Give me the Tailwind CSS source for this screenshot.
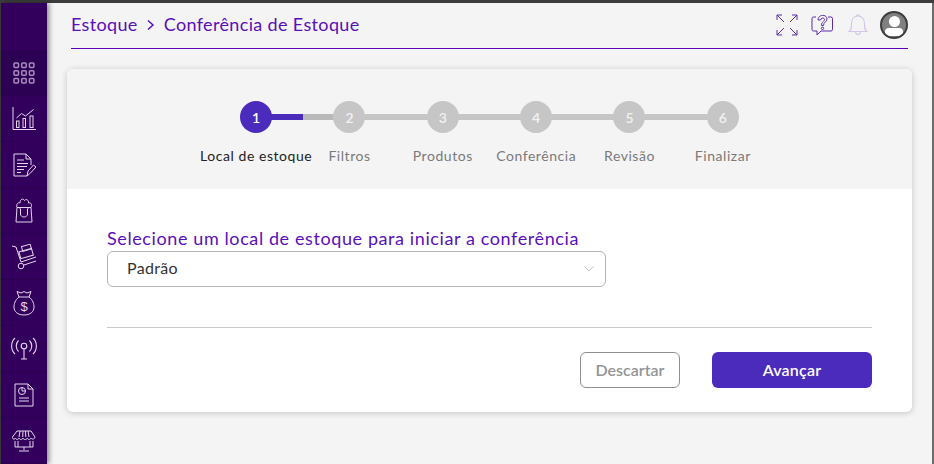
<!DOCTYPE html>
<html lang="pt-BR">
<head>
<meta charset="utf-8">
<script src="https://cdn.jsdelivr.net/npm/@tailwindcss/browser@4"></script>
<title>Conferência de Estoque</title>
</head>
<body class="w-[934px] h-[464px] overflow-hidden bg-[#f4f4f4] font-['Lato','Noto_Sans',sans-serif]">
<div class="w-[934px] h-[464px] flex flex-col">
  <div class="h-[3px] bg-[#3c3c3c] shrink-0"></div>
  <div class="flex-1 flex min-h-0 border-l border-l-[#3c3c3c] border-r-2 border-r-[#6b6b6b]">
    <aside class="w-[46px] shrink-0 bg-[#32005c] flex flex-col shadow-[2px_0_5px_rgba(0,0,0,0.45)] z-10 text-[#e3d6ee]">
      <div class="h-[47px] shrink-0"></div>
      <div class="h-[46px] shrink-0 bg-[#2c0052] border-b border-[#2a0050] flex items-center justify-center">
        <svg width="22" height="22" viewBox="0 0 22 22" fill="none" stroke="#a68cbd" stroke-width="1.500"><rect x="1" y="1" width="4.500" height="4.500" rx="1"/><rect x="8.700" y="1" width="4.500" height="4.500" rx="1"/><rect x="16.400" y="1" width="4.500" height="4.500" rx="1"/><rect x="1" y="8.700" width="4.500" height="4.500" rx="1"/><rect x="8.700" y="8.700" width="4.500" height="4.500" rx="1"/><rect x="16.400" y="8.700" width="4.500" height="4.500" rx="1"/><rect x="1" y="16.400" width="4.500" height="4.500" rx="1"/><rect x="8.700" y="16.400" width="4.500" height="4.500" rx="1"/><rect x="16.400" y="16.400" width="4.500" height="4.500" rx="1"/></svg>
      </div>
      <div class="h-[46px] shrink-0 border-b border-[#2a0050] flex items-center justify-center">
        <svg width="24" height="24" viewBox="0 0 24 24" fill="none" stroke="currentColor" stroke-width="1"><path d="M1 0v22.500h23"/><path d="M4.500 11l5-4.500 4 2.500 8-6.500"/><rect x="4.500" y="14" width="2.500" height="6.500"/><rect x="11" y="11.500" width="2.500" height="9"/><rect x="18" y="9" width="3" height="11.500"/></svg>
      </div>
      <div class="h-[46px] shrink-0 border-b border-[#2a0050] flex items-center justify-center">
        <svg width="24" height="24" viewBox="0 0 24 24" fill="none" stroke="currentColor" stroke-width="1"><path d="M14 1H2v22h13M14 1l5 5v6M14 1v5h5"/><path d="M5 7h7M5 10.500h11M5 13.500h10M5 16.500h7M5 19.500h4"/><path d="M15 23l1-5 5.500-6 2.500 2-5.500 6z"/></svg>
      </div>
      <div class="h-[46px] shrink-0 border-b border-[#2a0050] flex items-center justify-center">
        <svg width="18" height="25" viewBox="0 0 18 25" fill="none" stroke="currentColor" stroke-width="1"><path d="M2 9.500L1 24h16l-1-14.500z"/><path d="M2 9.500C1 6 3 4 5 5c0-4 3-5 4.500-2.500C11 .500 14 2 13.500 5c2-1 4 1.500 2.500 4.500"/><path d="M5 9v2M13 9v2"/><path d="M5.500 11v5c0 4 7 4 7 0v-5"/></svg>
      </div>
      <div class="h-[46px] shrink-0 border-b border-[#2a0050] flex items-center justify-center">
        <svg width="26" height="26" viewBox="0 0 26 26" fill="none" stroke="currentColor" stroke-width="1"><path d="M1 2l4 1 5 15 15-5"/><circle cx="10" cy="22" r="2.800"/><path d="M13 21l12-4"/><rect x="8.500" y="6" width="13" height="7" transform="rotate(-16 15 9)"/><rect x="11" y="1.500" width="9" height="5" transform="rotate(-16 15 4)"/></svg>
      </div>
      <div class="h-[46px] shrink-0 border-b border-[#2a0050] flex items-center justify-center">
        <svg width="22" height="26" viewBox="0 0 22 26" fill="none" stroke="currentColor" stroke-width="1"><path d="M6 7L4 1.500l4 1.500 3-1.500 3 1.500 4-1.500L16 7z"/><path d="M6 7C2 10 1 14 1 17c0 5 4 8 10 8s10-3 10-8c0-3-1-7-5-10"/><text x="11" y="21" text-anchor="middle" font-size="13" fill="currentColor" stroke="none" font-family="Liberation Sans">$</text></svg>
      </div>
      <div class="h-[46px] shrink-0 border-b border-[#2a0050] flex items-center justify-center">
        <svg width="26" height="24" viewBox="0 0 26 24" fill="none" stroke="currentColor" stroke-width="1.100"><circle cx="13" cy="9" r="2.800"/><path d="M13 12v10M10 22h6"/><path d="M7.500 3.500c-3 3-3 8 0 11M18.500 3.500c3 3 3 8 0 11"/><path d="M4 1C-.5 5-.5 13 4 17M22 1c4.500 4 4.500 12 0 16"/></svg>
      </div>
      <div class="h-[46px] shrink-0 border-b border-[#2a0050] flex items-center justify-center">
        <svg width="20" height="24" viewBox="0 0 20 24" fill="none" stroke="currentColor" stroke-width="1"><path d="M14 1H1v22h18V6zM14 1v5h5"/><circle cx="8" cy="8" r="3.500"/><path d="M8 8V4.500M8 8h3.500"/><path d="M5 15h10M5 18h10" stroke-width="1.200"/></svg>
      </div>
      <div class="h-[46px] shrink-0 border-b border-[#2a0050] flex items-center justify-center">
        <svg width="24" height="22" viewBox="0 0 24 22" fill="none" stroke="currentColor" stroke-width="1"><path d="M5 1h14l4 6c0 2-3 3-4 1-1 2-3 2-3.500 0-1 2-4 2-4.500 0-1 2-3 2-4 0-1 2-3 2-3.500 0-1 2-3.500 1-3-1z"/><path d="M8 1L7 7M11 1l-.3 6M13.500 1l.3 6M16 1l1 6"/><path d="M3 11v6h18v-6M6 11v6M18 11v6"/><path d="M12 17v3M7 21h10"/></svg>
      </div>
    </aside>
    <main class="flex-1 min-w-0 flex flex-col pl-5 pr-5">
      <header class="h-[46px] shrink-0 ml-[4px] mr-[4px] border-b border-[#5c00b8] flex items-center justify-between pb-[1px]">
        <div class="flex items-center text-[18px] tracking-[0.35px] text-[#5a0fb8] mt-[-1px]">
          <span>Estoque</span>
          <svg class="mx-[8px]" width="10" height="12" viewBox="0 0 10 12" fill="none" stroke="#5a0fb8" stroke-width="1.500"><path d="M2 1.500L7 6l-5 4.500"/></svg>
          <span>Conferência de Estoque</span>
        </div>
        <div class="flex items-center">
          <svg width="22" height="22" viewBox="0 0 22 22" fill="none" stroke="#5b2ea6" stroke-width="1"><path d="M1 6V1h5M1 1l7 7M16 1h5v5M21 1l-7 7M1 16v5h5M1 21l7-7M21 16v5h-5M21 21l-7-7"/></svg>
          <svg class="ml-[13px]" width="22" height="22" viewBox="0 0 22 22" fill="none" stroke="#5b2ea6" stroke-width="1"><path d="M5 3H2.500A1.500 1.500 0 0 0 1 4.500v11A1.500 1.500 0 0 0 2.500 17H6v4l4-4h10a1.500 1.500 0 0 0 1.500-1.500v-11A1.500 1.500 0 0 0 20 3h-3"/><path d="M7 6c0-6 9-6 9-1 0 3-3.500 3-3.500 6.500h-2C10.500 7.500 13.500 7.500 13.500 5.500c0-2-3.500-2-4 .5z"/><circle cx="11.500" cy="14.300" r="1.200"/></svg>
          <svg class="ml-[15px]" width="20" height="22" viewBox="0 0 20 22" fill="none" stroke="#d3c6e6" stroke-width="1.100"><path d="M1 17.500c2.500-2 2.500-4 2.500-8C3.500 5 6 2 10 2s6.500 3 6.500 7.500c0 4 0 6 2.500 8z"/><path d="M8.500 2c0-1.500 3-1.500 3 0M7.500 17.500c0 4 5 4 5 0"/></svg>
          <div class="ml-[12px] w-[28px] h-[28px] rounded-full bg-[#808080] border-2 border-[#3d3d3d] overflow-hidden flex flex-col items-center">
            <div class="w-[11px] h-[11px] rounded-full bg-white mt-[3px] shrink-0"></div>
            <div class="w-[18px] h-[8px] rounded-[4px] bg-white mt-[1px] shrink-0"></div>
          </div>
        </div>
      </header>
      <section class="mt-[20px] w-[845px] h-[343px] shrink-0 rounded-[6px] bg-white shadow-[0_1px_6px_rgba(0,0,0,0.2)] overflow-hidden">
        <div class="h-[120px] bg-[#f4f4f4] pt-[32px] flex flex-col items-center">
          <div class="relative w-[560px] grid grid-cols-6">
            <div class="absolute left-[47px] top-[13px] h-[6px] w-[467px] bg-[#c6c6c6]"></div>
            <div class="absolute left-[47px] top-[13px] h-[6px] w-[77px] bg-[#b9b9b9]"></div>
            <div class="absolute left-[47px] top-[13px] h-[6px] w-[46px] bg-[#4a2bbb]"></div>
            <div class="flex flex-col items-center relative"><div class="w-[32px] h-[32px] rounded-full bg-[#4a2bbb] text-white text-[14px] font-semibold flex items-center justify-center">1</div></div>
            <div class="flex flex-col items-center relative"><div class="w-[32px] h-[32px] rounded-full bg-[#c6c6c6] text-[#f2f2f2] text-[14px] font-semibold flex items-center justify-center">2</div></div>
            <div class="flex flex-col items-center relative"><div class="w-[32px] h-[32px] rounded-full bg-[#c6c6c6] text-[#f2f2f2] text-[14px] font-semibold flex items-center justify-center">3</div></div>
            <div class="flex flex-col items-center relative"><div class="w-[32px] h-[32px] rounded-full bg-[#c6c6c6] text-[#f2f2f2] text-[14px] font-semibold flex items-center justify-center">4</div></div>
            <div class="flex flex-col items-center relative"><div class="w-[32px] h-[32px] rounded-full bg-[#c6c6c6] text-[#f2f2f2] text-[14px] font-semibold flex items-center justify-center">5</div></div>
            <div class="flex flex-col items-center relative"><div class="w-[32px] h-[32px] rounded-full bg-[#c6c6c6] text-[#f2f2f2] text-[14px] font-semibold flex items-center justify-center">6</div></div>
          </div>
          <div class="w-[560px] grid grid-cols-6 mt-[14px] text-[14px] leading-[18px] tracking-[0.55px] text-[#7a7a7a] text-center">
            <span class="whitespace-nowrap flex justify-center text-[#222222]">Local de estoque</span>
            <span class="whitespace-nowrap flex justify-center">Filtros</span>
            <span class="whitespace-nowrap flex justify-center">Produtos</span>
            <span class="whitespace-nowrap flex justify-center">Conferência</span>
            <span class="whitespace-nowrap flex justify-center">Revisão</span>
            <span class="whitespace-nowrap flex justify-center">Finalizar</span>
          </div>
        </div>
        <div class="px-[40px] pt-[38px]">
          <div class="text-[18px] leading-[22px] text-[#5a0fb8] tracking-[0.6px]">Selecione um local de estoque para iniciar a conferência</div>
          <div class="mt-[2px] w-[499px] h-[36px] rounded-[6px] border border-[#b5b5b5] bg-white flex items-center justify-between pl-[19px] pr-[11px] text-[16px] text-[#333333] tracking-[0.3px]">
            <span class="mt-[-2px]">Padrão</span>
            <svg width="10" height="6" viewBox="0 0 10 6" fill="none" stroke="#c4c4c4" stroke-width="1"><path d="M.5.500L5 5 9.500.500"/></svg>
          </div>
          <div class="mt-[40px] h-px bg-[#c9c9c9]"></div>
          <div class="mt-[24px] flex justify-end">
            <button class="w-[100px] h-[36px] rounded-[6px] border border-[#8f8f8f] bg-white text-[16px] font-semibold text-[#949494]">Descartar</button>
            <button class="ml-[32px] w-[160px] h-[36px] rounded-[6px] bg-[#4a2bbb] text-[16px] font-semibold tracking-[0.2px] text-white">Avançar</button>
          </div>
        </div>
      </section>
    </main>
  </div>
</div>
</body>
</html>
